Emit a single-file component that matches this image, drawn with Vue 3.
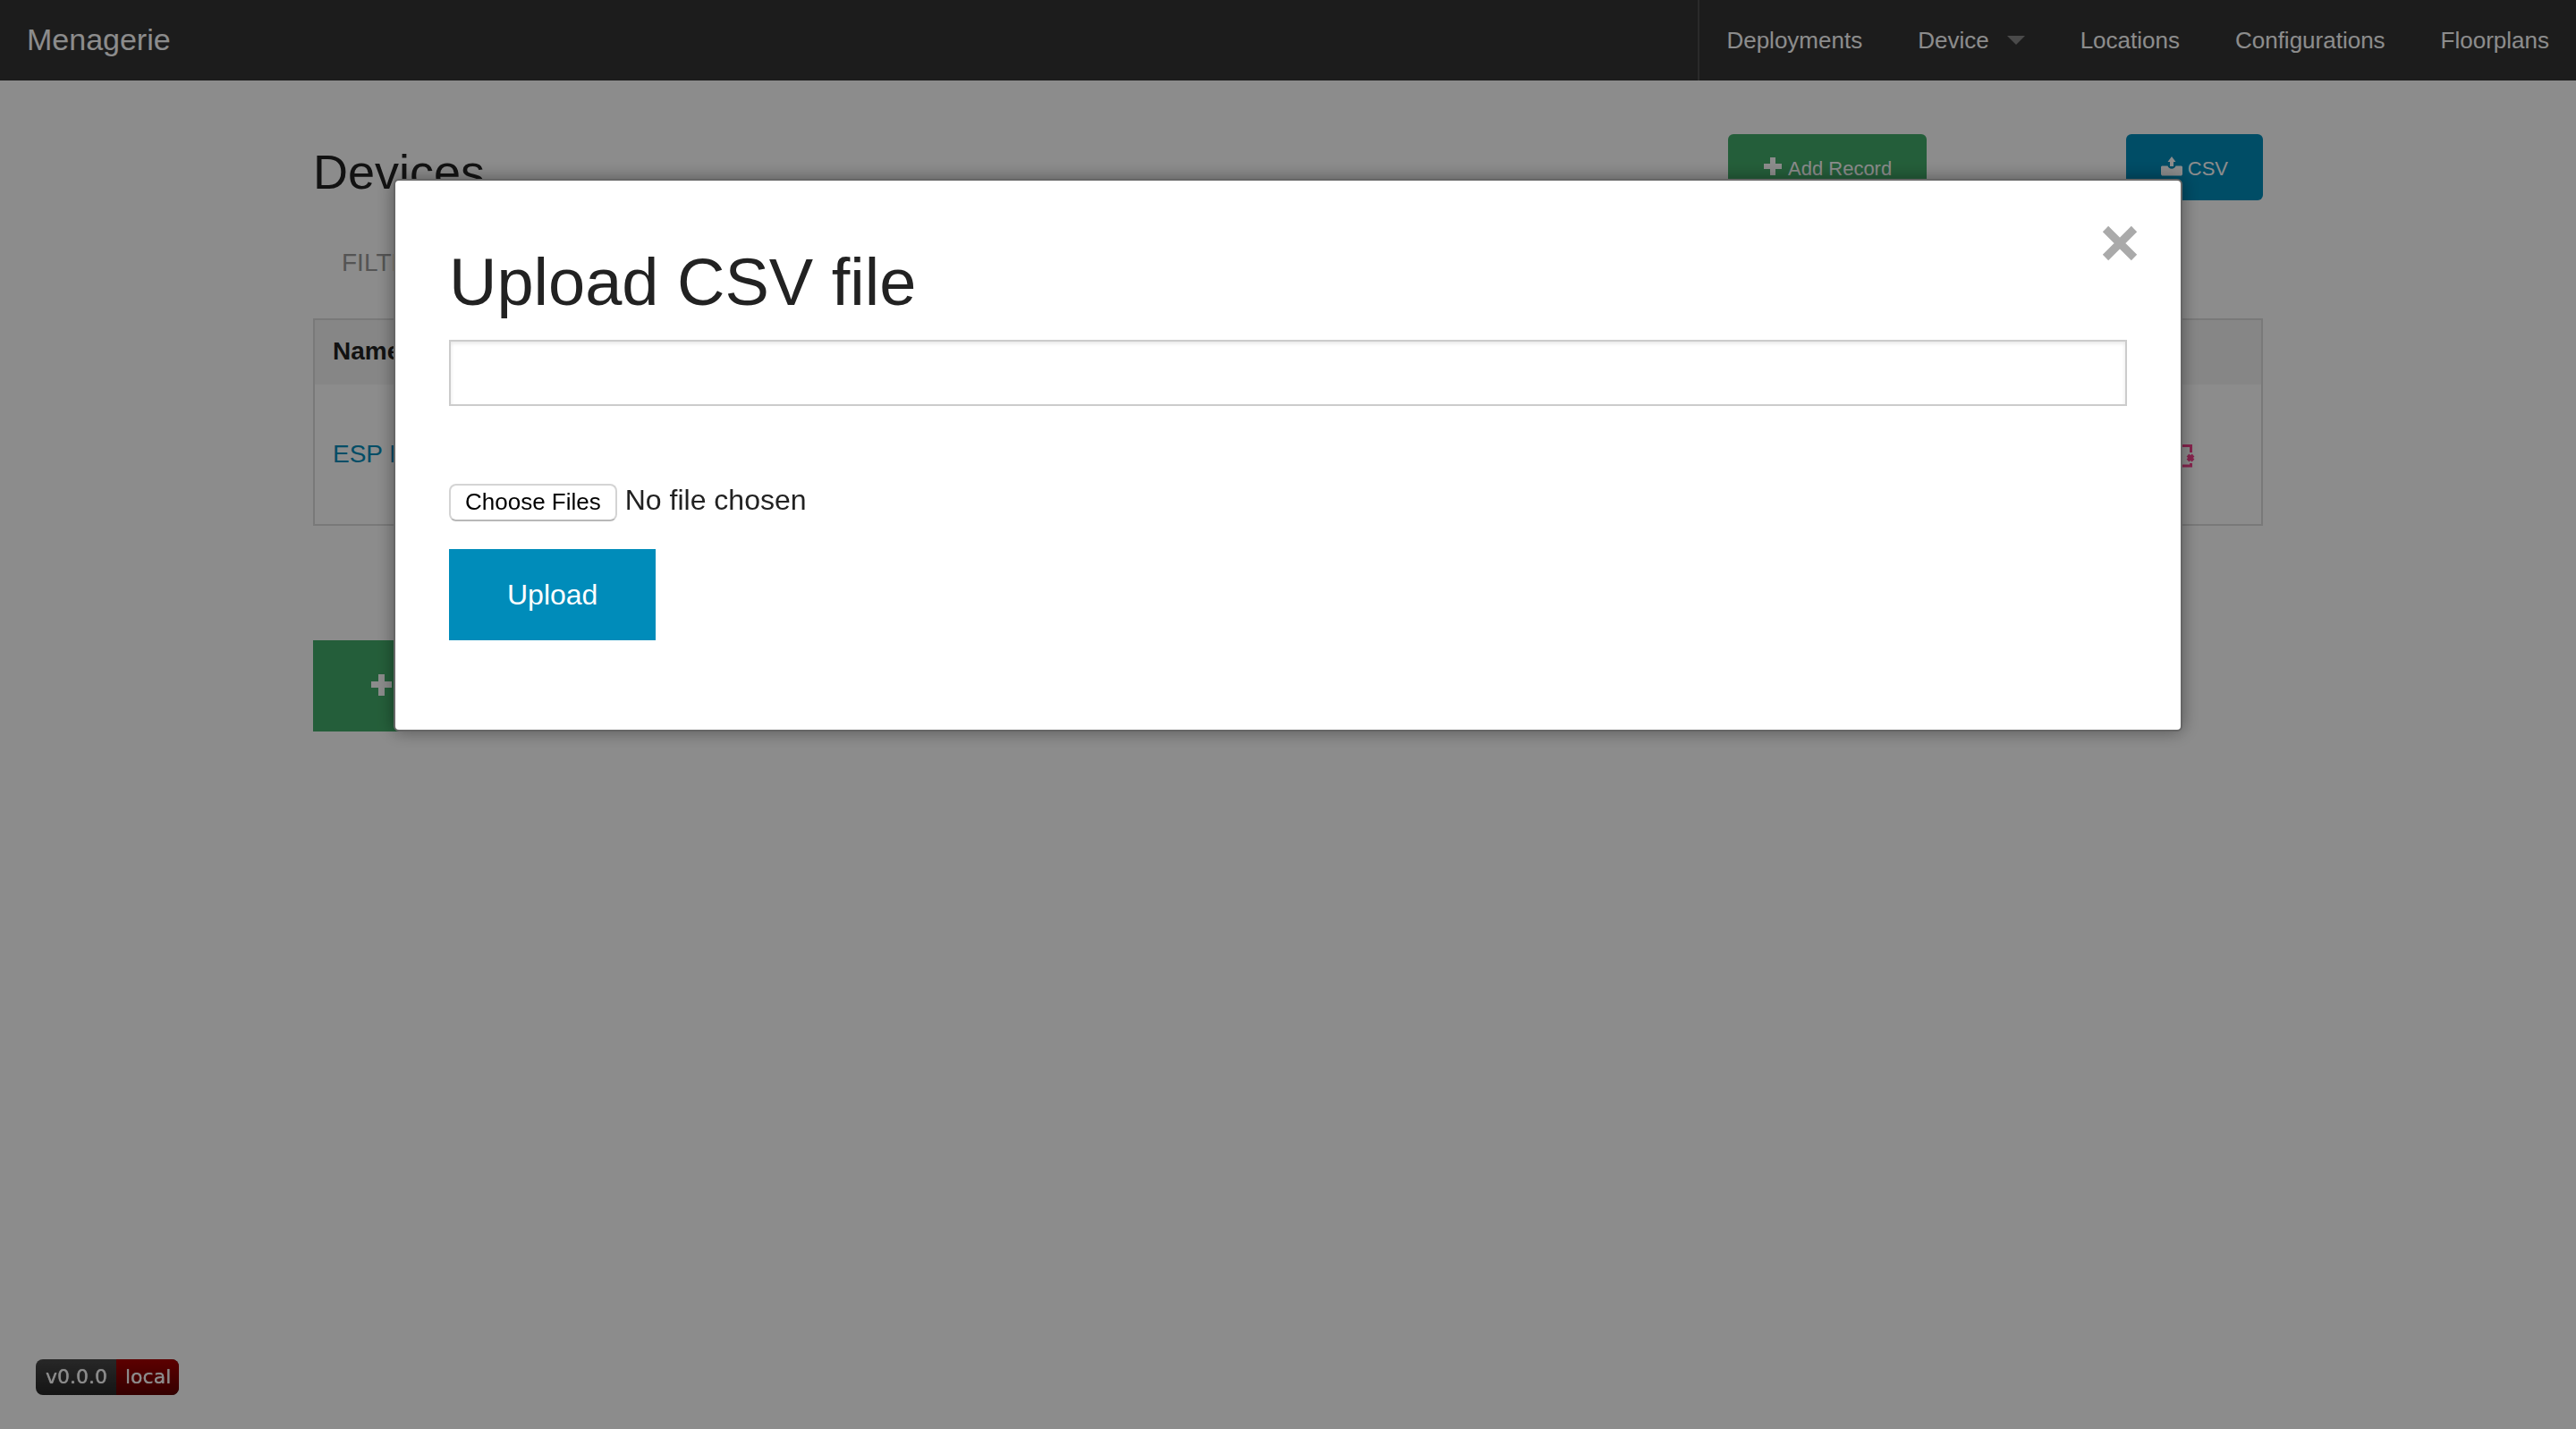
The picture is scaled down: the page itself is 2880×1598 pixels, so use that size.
<script setup>
import { ref } from 'vue'

const links = [
  { label: 'Deployments' },
  { label: 'Device', dropdown: true },
  { label: 'Locations' },
  { label: 'Configurations' },
  { label: 'Floorplans' },
]
const fileName = ref('')
</script>

<template>
  <div class="page">
    <header class="topbar">
      <a class="brand" href="#">Menagerie</a>
      <nav class="nav">
        <a v-for="l in links" :key="l.label" href="#" :class="{ dropdown: l.dropdown }">{{ l.label }}</a>
      </nav>
    </header>

    <main class="row">
      <div class="heading">
        <h3>Devices</h3>
        <div class="actions">
          <button class="tiny success" type="button">
            <svg class="icon" viewBox="0 0 22 22"><path d="M8 1h6v7h7v6h-7v7H8v-7H1V8h7z" /></svg>
            Add Record
          </button>
          <button class="tiny" type="button">
            <svg class="icon" viewBox="0 0 24 22">
              <path d="M12 0l4.500 6H14v5h-4V6H7.500z" />
              <path d="M1 10.500h6.500c.5 2 2.300 3.200 4.500 3.200s4-1.200 4.500-3.200H23l1 1V20l-1 1.500H1L0 20v-8.500z" />
            </svg>
            CSV
          </button>
        </div>
      </div>

      <a class="filters" href="#">FILTERS</a>

      <table>
        <thead>
          <tr><th>Name</th><th></th></tr>
        </thead>
        <tbody>
          <tr>
            <td><a href="#">ESP H</a></td>
            <td class="tools">
              <a href="#" aria-label="Delete">
                <svg viewBox="0 0 30 26">
                  <path d="M5 1.500H25.500V9M5 1.500v22.500h20.500V21" fill="none" stroke="currentColor" stroke-width="3" />
                  <path d="M22 12l6 6M28 12l-6 6" stroke="currentColor" stroke-width="4" />
                </svg>
              </a>
            </td>
          </tr>
        </tbody>
      </table>

      <button class="large success" type="button">
        <svg class="icon" viewBox="0 0 24 24"><path d="M8 0h7v8h8v7h-8v9H8v-9H0V8h8z" /></svg>
        Add Record
      </button>
    </main>

    <div class="badge"><span>v0.0.0</span><span class="env">local</span></div>

    <div class="overlay">
      <section class="modal" role="dialog" aria-labelledby="modal-title">
        <h2 id="modal-title">Upload CSV file</h2>
        <button class="close" type="button" aria-label="Close">
          <svg viewBox="0 0 40 40"><path d="M4 4l32 32M36 4L4 36" stroke="currentColor" stroke-width="9" /></svg>
        </button>
        <input v-model="fileName" class="text" type="text" aria-label="File name" />
        <input class="file" type="file" multiple aria-label="CSV files" />
        <button class="large" type="button">Upload</button>
      </section>
    </div>
  </div>
</template>

<style>
body {
  margin: 0;
  background: #fff;
}
</style>

<style scoped>
* {
  box-sizing: border-box;
}
.page {
  min-height: 100vh;
  font-family: "Liberation Sans", Arial, sans-serif;
  color: #222;
}
a {
  color: #008cba;
  text-decoration: none;
}
h2, h3 {
  margin: 0;
  font-weight: 400;
}
button {
  border: 0;
  font-family: inherit;
}
.topbar {
  display: flex;
  justify-content: space-between;
  height: 90px;
  background: #333;
  line-height: 90px;
}
.topbar a {
  color: #fff;
}
.topbar .brand {
  padding: 0 30px;
  font-size: 34px;
  line-height: 88px;
}
.nav {
  display: flex;
  gap: 2px;
  border-left: 2px solid #4e4e4e;
  font-size: 26px;
}
.nav a {
  padding: 0 30px;
}
.nav .dropdown::after {
  content: "";
  display: inline-block;
  margin: 0 0 4px 20px;
  border: 10px solid transparent;
  border-top-color: #888;
  border-bottom: 0;
}
.row {
  max-width: 2180px;
  margin: 0 auto;
  padding-top: 60px;
}
.heading {
  display: flex;
  justify-content: space-between;
}
h3 {
  padding-top: 4px;
  font-size: 54px;
  line-height: 76px;
}
.actions {
  display: flex;
  justify-content: space-between;
  align-items: flex-start;
  width: 598px;
  height: 82px;
}
.tiny, .large {
  display: flex;
  align-items: center;
  background: #008cba;
  color: #fff;
}
.tiny {
  gap: 6px;
  height: 74px;
  padding: 4px 39px 0;
  border-radius: 6px;
  font-size: 22px;
}
.large {
  gap: 10px;
  height: 102px;
  padding: 2px 65px 0;
  font-size: 32px;
}
.success {
  background: #43ac6a;
}
.icon {
  height: 22px;
  margin-bottom: 7px;
  fill: currentColor;
}
.large .icon {
  height: 24px;
  margin-bottom: 4px;
}
.filters {
  display: block;
  padding: 44px 32px;
  color: #999;
  font-size: 28px;
  line-height: 36px;
}
table {
  width: 100%;
  border: 2px solid #ddd;
  border-spacing: 0;
  font-size: 28px;
  text-align: left;
}
th, td {
  height: 156px;
  padding: 0 20px;
}
th {
  height: 72px;
  padding-bottom: 2px;
  background: #f5f5f5;
}
.tools {
  text-align: right;
}
.tools a {
  display: inline-block;
  margin-right: 54px;
  color: #f7438f;
  vertical-align: middle;
}
.tools svg {
  display: block;
  height: 26px;
}
.success.large {
  margin-top: 128px;
}
.badge {
  position: fixed;
  left: 40px;
  bottom: 38px;
  display: flex;
  height: 40px;
  overflow: hidden;
  border-radius: 8px;
  background: linear-gradient(#484848, #262626);
  color: #fff;
  font: 22px/40px "DejaVu Sans", sans-serif;
  text-shadow: 0 0 1px #fff;
}
.badge span {
  padding: 0 10px 0 11px;
}
.badge .env {
  padding: 0 9px 0 10px;
  background: linear-gradient(#a80000, #600000);
}
.overlay {
  position: fixed;
  inset: 0;
  background: rgba(0, 0, 0, 0.45);
}
.modal {
  position: relative;
  display: flex;
  flex-direction: column;
  align-items: flex-start;
  max-width: 2000px;
  margin: 200px auto 0;
  padding: 60px 60px 100px;
  border: 2px solid #666;
  border-radius: 6px;
  background: #fff;
  box-shadow: 0 0 20px rgba(0, 0, 0, 0.4);
}
h2 {
  padding-top: 2px;
  margin-bottom: 12px;
  font-size: 74px;
  line-height: 104px;
}
.close {
  position: absolute;
  top: 50px;
  right: 48px;
  padding: 0;
  background: none;
  color: #aaa;
}
.close svg {
  display: block;
  width: 40px;
}
.text {
  width: 100%;
  height: 74px;
  padding: 16px;
  border: 2px solid #ccc;
  box-shadow: inset 0 2px 4px rgba(0, 0, 0, 0.1);
  font: 28px "Liberation Sans", Arial, sans-serif;
}
.file {
  margin: 83px 0 31px;
  color: #222;
  font: 32px/44px "Liberation Sans", Arial, sans-serif;
}
.file::file-selector-button {
  height: 42px;
  margin: 0 9px 0 0;
  padding: 0 16px;
  border: 2px solid #d4d4d4;
  border-bottom-color: #b8b8b8;
  border-radius: 8px;
  background: #fff;
  color: #000;
  font: 26px "Liberation Sans", Arial, sans-serif;
}
</style>
